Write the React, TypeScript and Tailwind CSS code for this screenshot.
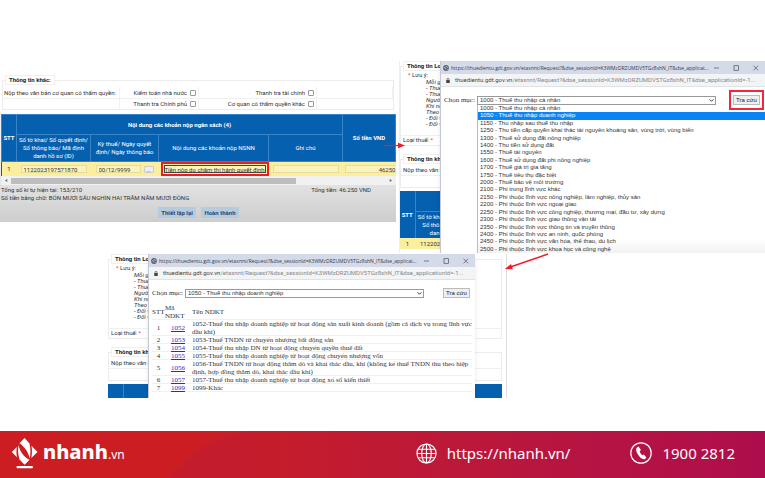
import React from 'react';

const SESSION = 'K3WMzDRZUMDV5TGz8shN_IT';

const TAX_ITEMS = [
  '1000 - Thuế thu nhập cá nhân',
  '1050 - Thuế thu nhập doanh nghiệp',
  '1150 - Thu nhập sau thuế thu nhập',
  '1250 - Thu tiền cấp quyền khai thác tài nguyên khoáng sản, vùng trời, vùng biển',
  '1300 - Thuế sử dụng đất nông nghiệp',
  '1400 - Thu tiền sử dụng đất',
  '1550 - Thuế tài nguyên',
  '1600 - Thuế sử dụng đất phi nông nghiệp',
  '1700 - Thuế giá trị gia tăng',
  '1750 - Thuế tiêu thụ đặc biệt',
  '2000 - Thuế bảo vệ môi trường',
  '2100 - Phí trong lĩnh vực khác',
  '2150 - Phí thuộc lĩnh vực nông nghiệp, lâm nghiệp, thủy sản',
  '2200 - Phí thuộc lĩnh vực ngoại giao',
  '2250 - Phí thuộc lĩnh vực công nghiệp, thương mại, đầu tư, xây dựng',
  '2300 - Phí thuộc lĩnh vực giao thông vận tải',
  '2350 - Phí thuộc lĩnh vực thông tin và truyền thông',
  '2400 - Phí thuộc lĩnh vực an ninh, quốc phòng',
  '2450 - Phí thuộc lĩnh vực văn hóa, thể thao, du lịch',
  '2500 - Phí thuộc lĩnh vực khoa học và công nghệ',
];

const NDKT_ROWS = [
  { code: '1052', name: '1052-Thuế thu nhập doanh nghiệp từ hoạt động sản xuất kinh doanh (gồm cả dịch vụ trong lĩnh vực dầu khí)' },
  { code: '1053', name: '1053-Thuế TNDN từ chuyển nhượng bất động sản' },
  { code: '1054', name: '1054-Thuế thu nhập DN từ hoạt động chuyển quyền thuê đất' },
  { code: '1055', name: '1055-Thuế thu nhập doanh nghiệp từ hoạt động chuyển nhượng vốn' },
  { code: '1056', name: '1056-Thuế TNDN từ hoạt động thăm dò và khai thác dầu, khí (không kể thuế TNDN thu theo hiệp định, hợp đồng thăm dò, khai thác dầu khí)' },
  { code: '1057', name: '1057-Thuế thu nhập doanh nghiệp từ hoạt động xổ số kiến thiết' },
  { code: '1099', name: '1099-Khác' },
];

const NOTES = ['Mỗi gi', '- Thuế', '- Thuế', 'Người', 'Khi nộ', 'Theo đ', '- Đối v', '- Đối v'];

function Check({ label, className = '' }: { label: string; className?: string }) {
  return (
    <label className={`flex items-center justify-end gap-[3px] pr-0.5 ${className}`}>
      {label}
      <input type="checkbox" className="size-[6px] appearance-none rounded-[1px] border border-[#999] bg-white" />
    </label>
  );
}

function Legend({ children }: { children: React.ReactNode }) {
  return (
    <legend className="ml-[2px] h-[10px] border border-[#f0f0f0] bg-white px-[3px] text-[6px] leading-[8px] font-bold text-[#222]">
      {children}
    </legend>
  );
}

function DeclarationPanel() {
  const head = 'border border-[#3a83c6] p-0 text-center';
  const field = 'block h-[8px] w-full border border-[#e6dc9c] bg-[#fbf3bd] px-[2px] text-[6px] leading-[6px] text-[#333]';
  return (
    <section className="absolute top-[75px] left-0 w-[396px] overflow-hidden font-['Roboto',sans-serif] text-[6px] leading-[8px] text-[#333]">
      <fieldset className="mx-[2px] border border-[#ececec]">
        <Legend>Thông tin khác:</Legend>
        <div className="mt-[2px] grid grid-cols-[117px_79px_118px_1fr] grid-rows-[11px_11px] divide-x divide-[#f0f0f0]">
          <span className="pl-px leading-[11px]">Nộp theo văn bản cơ quan có thẩm quyền:</span>
          <Check label="Kiểm toán nhà nước" />
          <Check label="Thanh tra tài chính" />
          <span />
          <span className="border-t border-[#f0f0f0]" />
          <Check label="Thanh tra Chính phủ" className="border-t border-[#f0f0f0]" />
          <Check label="Cơ quan có thẩm quyền khác" className="border-t border-[#f0f0f0]" />
          <span className="border-t border-[#f0f0f0]" />
        </div>
      </fieldset>

      <div className="mt-[4px] bg-linear-to-b from-[#f2f2f2] from-40% to-[#cdcdcd] pb-[4px] pl-px">
        <table className="w-full table-fixed border-collapse bg-[#0560b0] text-[6px] leading-[8px] text-white">
          <colgroup>
            <col className="w-[15px]" />
            <col className="w-[74px]" />
            <col className="w-[68px]" />
            <col className="w-[110px]" />
            <col className="w-[74px]" />
            <col />
          </colgroup>
          <thead>
            <tr className="h-[20px]">
              <th rowSpan={2} className={head}>STT</th>
              <th colSpan={4} className={head}>Nội dung các khoản nộp ngân sách (4)</th>
              <th rowSpan={2} className={head}>Số tiền VND</th>
            </tr>
            <tr className="h-[27px]">
              <th className={`${head} font-normal`}>Số tờ khai/ Số quyết định/<br />Số thông báo/ Mã định<br />danh hồ sơ (ID)</th>
              <th className={`${head} font-normal`}>Kỳ thuế/ Ngày quyết<br />định/ Ngày thông báo</th>
              <th className={`${head} font-normal`}>Nội dung các khoản nộp NSNN</th>
              <th className={`${head} font-normal`}>Ghi chú</th>
            </tr>
          </thead>
          <tbody className="bg-[#fbee9f] text-[#333]">
            <tr className="h-[11px]">
              <td className="p-0 text-center">1</td>
              <td className="px-1 py-0">
                <input aria-label="Số tờ khai" defaultValue="1122023197571870" className={field} />
              </td>
              <td className="px-[5px] py-0">
                <div className="flex items-center gap-[3px]">
                  <input aria-label="Kỳ thuế" defaultValue="00/12/9999" className={field} />
                  <button className="h-[7px] w-[10px] shrink-0 rounded-[1px] border border-[#ccc] bg-[#eee] leading-[3px]">...</button>
                </div>
              </td>
              <td className="p-0">
                <div className="ml-[2px] border-2 border-[#ee1c1c] p-px">
                  <input
                    aria-label="Nội dung các khoản nộp"
                    defaultValue="Tiền nộp do chậm thi hành quyết định x"
                    className="block h-[8px] w-full border border-[#444] bg-[#fbf3bd] text-[6px] leading-[6px]"
                  />
                </div>
              </td>
              <td className="px-1 py-0">
                <input aria-label="Ghi chú" className={field} />
              </td>
              <td className="py-0 pr-0 pl-[2px]">
                <input
                  aria-label="Số tiền"
                  defaultValue="46250"
                  className="block h-[8px] w-full border-y border-l border-[#e6dc9c] bg-[#fbf3bd] text-right text-[6px] leading-[6px]"
                />
              </td>
            </tr>
          </tbody>
        </table>

        <div className="flex h-[9px] items-center gap-[3px] bg-[#f1f1f1] px-1 text-[#666]">
          <svg viewBox="0 0 4 4" className="size-[3px]"><path d="M3 0v4L0 2z" fill="currentColor" /></svg>
          <div className="flex-1">
            <div className="h-[6px] w-[76%] bg-[#bdbdbd]" />
          </div>
          <svg viewBox="0 0 4 4" className="size-[3px]"><path d="M1 0v4l3-2z" fill="currentColor" /></svg>
        </div>

        <div className="flex justify-between pt-px pr-[25px]">
          <span>Tổng số kí tự hiện tại: 153/210</span>
          <span>Tổng tiền: 46.250 VND</span>
        </div>
        <p>Số tiền bằng chữ: BỐN MƯƠI SÁU NGHÌN HAI TRĂM NĂM MƯƠI ĐỒNG</p>
        <div className="mt-[5px] flex justify-center gap-[5px]">
          <button className="h-[11px] w-[38px] bg-[#b7cbe0] font-bold text-[#234a70]">Thiết lập lại</button>
          <button className="h-[11px] w-[38px] bg-[#b7cbe0] font-bold text-[#234a70]">Hoàn thành</button>
        </div>
      </div>
    </section>
  );
}

/* The payment form that stays open behind each lookup popup */
function FormBackdrop({ showRow = false }: { showRow?: boolean }) {
  return (
    <div className="w-[394px] font-['Roboto',sans-serif] text-[6px] leading-[8px] text-[#333]">
      <fieldset className="border border-[#ececec] pb-px">
        <Legend>Thông tin Lo</Legend>
        <p className="pl-[7px]"><span className="text-red-500">*</span> Lưu ý:</p>
        <ul className="pb-[8px] pl-[25px] leading-[6px] italic">
          {NOTES.map((note, i) => (
            <li key={i}>{note}</li>
          ))}
        </ul>
        <p className="border-t border-[#f0f0f0] pl-[2px]">Loại thuế: <span className="text-red-500">*</span></p>
      </fieldset>
      <fieldset className="mt-[8px] border border-[#ececec]">
        <Legend>Thông tin kh</Legend>
        <p className="mt-[2px] border-b border-[#f0f0f0] pb-px pl-[2px]">Nộp theo văn b</p>
        <div className="h-[11px]" />
      </fieldset>
      <table className="mt-[3px] w-full table-fixed border-collapse bg-[#0560b0] text-white">
        <colgroup>
          <col className="w-[15px]" />
          <col />
        </colgroup>
        <thead>
          <tr className="h-[20px]">
            <th rowSpan={2} className="border-r border-[#3a83c6] p-0">{showRow && 'STT'}</th>
            <th className="border-b border-[#3a83c6] p-0" />
          </tr>
          <tr className="h-[27px]">
            <th className="p-0 pl-[2px] text-left font-normal">
              {showRow && (
                <span className="block w-[22px] text-right whitespace-nowrap">Số tờ kh<br />Số thô<br />dan</span>
              )}
            </th>
          </tr>
        </thead>
        {showRow && (
          <tbody className="bg-[#fbee9f] text-[#333]">
            <tr className="h-[11px]">
              <td className="p-0 text-center">1</td>
              <td className="p-0 pl-[5px]">112202</td>
            </tr>
          </tbody>
        )}
      </table>
    </div>
  );
}

function PopupWindow({ children }: { children: React.ReactNode }) {
  return (
    <div className="flex h-full flex-col overflow-hidden border-l border-[#c4c8d2] bg-white shadow-md">
      <div className="flex h-[13px] shrink-0 items-center bg-[#d5dae8] pr-[6px] pl-[2px] text-[#333a4a]">
        <svg viewBox="0 0 12 12" className="size-[6px] shrink-0">
          <circle cx="6" cy="6" r="5.8" fill="#5b6270" />
          <path d="M2 5l3 1 1 3M6 2l1 2 3 1M8 8l1 1" stroke="#d5dae8" strokeWidth="1.4" fill="none" />
        </svg>
        <span className="ml-[2px] font-['Open_Sans',sans-serif] text-[5px] leading-[8px] whitespace-nowrap">
          https://thuedientu.gdt.gov.vn/etaxnnt/Request?&amp;dse_sessionId={SESSION}&amp;dse_applicat...
        </span>
        <svg viewBox="0 0 45 6" className="ml-auto h-[6px] w-[45px] shrink-0" stroke="#4a5060" strokeWidth="0.7" fill="none">
          <path d="M0 3h5" />
          <rect x="20" y="0.7" width="4.6" height="4.6" />
          <path d="M39.5.7l4.6 4.6M44.1.7l-4.6 4.6" />
        </svg>
      </div>
      <div className="flex h-[13px] shrink-0 items-center gap-[5px] border-b border-[#e0e2e6] bg-[#f3f4f6] pl-[5px]">
        <svg viewBox="0 0 8 10" className="h-[5px] w-[4px] shrink-0">
          <rect x="0.5" y="4" width="7" height="6" fill="#444" />
          <path d="M2 4V2.6a2 2 0 014 0V4" stroke="#444" strokeWidth="1.3" fill="none" />
        </svg>
        <span className="font-['Roboto',sans-serif] text-[6px] leading-[8px] whitespace-nowrap text-[#888]">
          <span className="text-[#444]">thuedientu.gdt.gov.vn</span>/etaxnnt/Request?&amp;dse_sessionId={SESSION}&amp;dse_applicationId=-1...
        </span>
      </div>
      {children}
    </div>
  );
}

function LookupBar({ id, value, highlight = false }: { id: string; value: string; highlight?: boolean }) {
  return (
    <div className={`relative z-10 flex h-[20px] items-center pl-[3px] ${highlight ? 'pr-px' : 'pr-[5px]'}`}>
      <label htmlFor={id} className="w-[33px] shrink-0 font-['Liberation_Serif',serif] text-[7px] leading-[8px] text-[#333]">
        Chọn mục:
      </label>
      <div className="relative w-[239px]">
        <select
          id={id}
          defaultValue={value}
          className="block h-[9px] w-full appearance-none border border-[#999] bg-white pl-[2px] font-['Liberation_Sans',sans-serif] text-[6px] leading-[7px] text-[#333]"
        >
          <option>{value}</option>
        </select>
        <svg viewBox="0 0 6 4" className="pointer-events-none absolute top-[3px] right-[2px] h-[3px] w-[5px]">
          <path d="M0.5 0.5L3 3l2.5-2.5" stroke="#222" strokeWidth="1.2" fill="none" />
        </svg>
      </div>
      <div className={`ml-auto ${highlight ? 'border-2 border-[#f0283c] px-[2px] py-[3px]' : ''}`}>
        <button className="block h-[10px] w-[27px] border border-[#bbb] bg-[#efefef] font-['Liberation_Sans',sans-serif] text-[6px] leading-[8px] text-[#222]">
          Tra cứu
        </button>
      </div>
    </div>
  );
}

function DropdownStep() {
  return (
    <section className="absolute top-[61px] right-0 left-[399px] h-[192px] overflow-hidden border-l border-[#eee] bg-white">
      <FormBackdrop showRow />
      <div className="absolute inset-y-0 right-0 left-[40px]">
        <PopupWindow>
          <div className="pt-[3px]">
            <LookupBar id="item-open" value={TAX_ITEMS[0]} highlight />
          </div>
          <ul
            role="listbox"
            aria-label="Danh mục"
            className="-mt-[5px] ml-[36px] flex h-[148px] flex-col border-l border-[#bbb] bg-linear-to-b from-white from-90% to-[#f2f2f2] font-['Liberation_Sans',sans-serif] text-[6px] leading-[7px] text-[#333]"
          >
            {TAX_ITEMS.map((item, i) => (
              <li
                key={item}
                role="option"
                aria-selected={i === 1}
                className={`flex-1 pl-[2px] whitespace-nowrap ${i === 1 ? 'bg-[#0a84f5] text-white' : ''}`}
              >
                {item}
              </li>
            ))}
          </ul>
        </PopupWindow>
      </div>
    </section>
  );
}

function ResultStep() {
  // inset line instead of a border, so single-line rows keep their 8px
  const cell = 'p-0 align-middle shadow-[inset_0_-1px_0_#f0f0f0]';
  return (
    <section className="absolute top-[254px] left-[108px] h-[144px] w-[399px] overflow-hidden border-r border-[#ddd] bg-white">
      <FormBackdrop />
      <div className="absolute inset-y-0 left-[40px] w-[327px]">
        <PopupWindow>
          <div className="pt-[3px]">
            <LookupBar id="item-chosen" value={TAX_ITEMS[1]} />
          </div>
          <table className="mx-[3px] table-fixed border-collapse font-['Liberation_Serif',serif] text-[7px] leading-[8px] text-[#333]">
            <colgroup>
              <col className="w-[13px]" />
              <col className="w-[26px]" />
              <col />
            </colgroup>
            <thead>
              <tr className="h-[17px] text-left">
                <th className={`${cell} font-normal`}>STT</th>
                <th className={`${cell} font-normal`}>Mã NDKT</th>
                <th className={`${cell} pl-px font-normal`}>Tên NDKT</th>
              </tr>
            </thead>
            <tbody>
              {NDKT_ROWS.map((row, i) => (
                <tr key={row.code}>
                  <td className={`${cell} text-center`}>{i + 1}</td>
                  <td className={`${cell} text-center`}>
                    <a href="#" className="text-[#2a2ac8] underline">{row.code}</a>
                  </td>
                  <td className={`${cell} pl-px`}>{row.name}</td>
                </tr>
              ))}
            </tbody>
          </table>
        </PopupWindow>
      </div>
    </section>
  );
}

function Arrows() {
  return (
    <svg viewBox="0 0 765 431" className="pointer-events-none absolute top-0 left-0 h-[431px] w-[765px]" stroke="#ee1c24" fill="#ee1c24">
      <path d="M383 145.5H401" strokeWidth="1.2" />
      <path d="M405 145.5l-7-2.7v5.4z" stroke="none" />
      <path d="M548 254L509 267.5" strokeWidth="1.4" />
      <path d="M505 269l6-5 1.9 5.2z" stroke="none" />
    </svg>
  );
}

function Footer() {
  return (
    <footer className="relative flex h-[47px] items-center overflow-hidden bg-linear-to-r from-[#cc1e22] from-25% via-[#bf1a34] via-50% to-[#ae0d4c] pr-[30px] pb-[3px] pl-[11px] font-['Noto_Sans',sans-serif] text-white">
      <svg viewBox="0 0 120 47" className="absolute top-0 left-[165px] h-[47px] w-[120px]">
        <defs>
          <linearGradient id="arc">
            <stop offset="0.4" stopColor="#b81a3a" stopOpacity="0.4" />
            <stop offset="1" stopColor="#b81a3a" stopOpacity="0" />
          </linearGradient>
        </defs>
        <path d="M5 47C20 24 48 5 85 0H120V47Z" fill="url(#arc)" />
      </svg>
      <a href="#" className="relative flex items-center gap-[5px]">
        <svg viewBox="0 0 27 32" className="h-[32px] w-[27px]" fill="white">
          <path d="M13.500 1l5 5.500c1.300 5.500 1.200 10 .2 15C17.500 15.500 13.500 9.500 8.500 6.300z" />
          <path d="M7.500 8c1.200 6 5.500 12.500 11 14.700L13.600 27.800 8.500 22.500C7 17.500 6.700 12.500 7.500 8z" />
          <path d="M5.800 10c-.5 3.200-.5 7 .2 10.200L.8 15z" />
          <path d="M20.500 8.800L26.500 15l-6.200 6c.8-4 .9-8 .2-12.200z" />
          <rect x="5.500" y="29" width="16.500" height="2.300" rx="1.100" />
        </svg>
        <span className="text-[20px] leading-[28px] font-extrabold">
          nhanh<span className="text-[12px] font-normal">.vn</span>
        </span>
      </a>
      <a href="#" className="relative ml-auto flex items-center gap-[10px] text-[15px] leading-[20px]">
        <svg viewBox="0 0 22 22" className="size-[21px]" fill="none" stroke="white" strokeWidth="1.2">
          <circle cx="11" cy="11" r="10" />
          <ellipse cx="11" cy="11" rx="5" ry="10" />
          <path d="M11 1v20M1 11h20M2.500 6.500h17M2.500 15.500h17" />
        </svg>
        https://nhanh.vn/
      </a>
      <a href="tel:19002812" className="relative ml-[60px] flex items-center gap-[10px] text-[15px] leading-[20px]">
        <svg viewBox="0 0 22 22" className="size-[22px]">
          <circle cx="11" cy="11" r="10.2" fill="none" stroke="white" strokeWidth="1.2" />
          <path
            d="M7.2 5.2l1.4-.6 2.3 3.5-1.3 1.3c.5 1.5 1.4 2.8 2.7 3.8l1.6-.8 2.5 3.1-1.3 1.5c-1.5.8-3.8-.3-5.7-2.5C7.3 12.100 6 9.500 6.100 7.300c0-.9.4-1.600 1.100-2.100z"
            fill="white"
          />
        </svg>
        1900 2812
      </a>
    </footer>
  );
}

export default function App() {
  return (
    <div className="flex min-h-screen flex-col bg-white font-['Liberation_Sans',Arial,sans-serif]">
      <main className="relative min-h-[431px] flex-1">
        <DeclarationPanel />
        <DropdownStep />
        <ResultStep />
        <Arrows />
      </main>
      <Footer />
    </div>
  );
}
